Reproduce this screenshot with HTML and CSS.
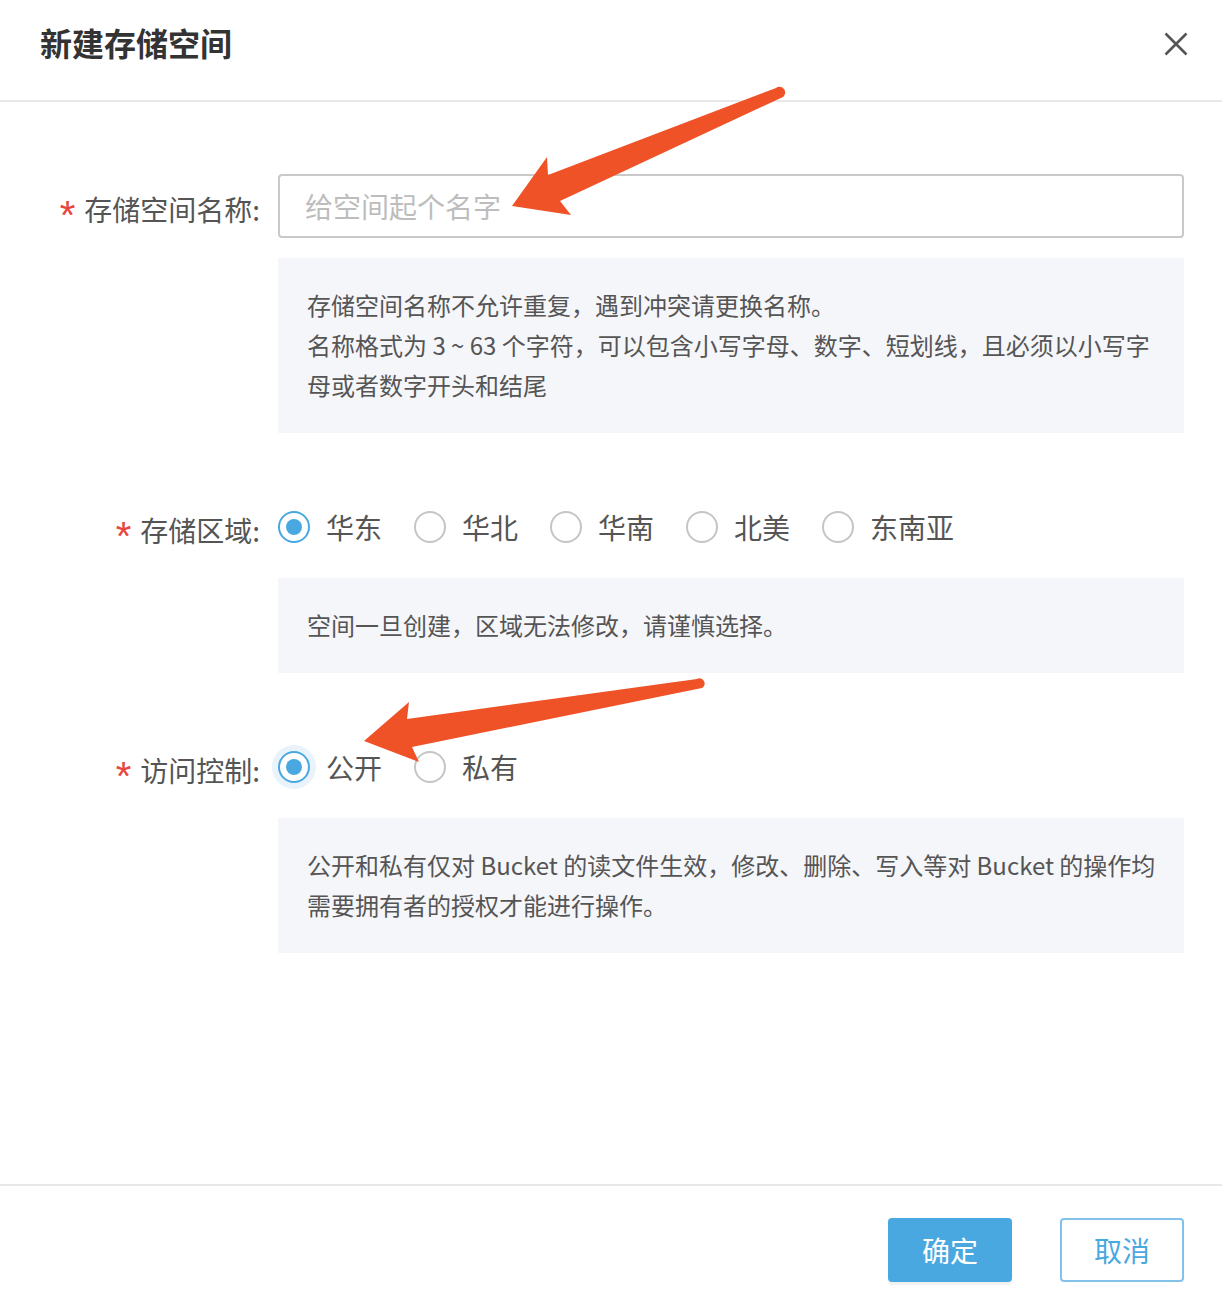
FILE: index.html
```html
<!DOCTYPE html>
<html lang="zh-CN">
<head>
<meta charset="utf-8">
<title>新建存储空间</title>
<link rel="stylesheet" href="styles.css">
</head>
<body>
<div class="dialog">
  <header class="dlg-head">
    <h1 class="dlg-title">新建存储空间</h1>
    <button class="close" type="button" aria-label="关闭">
      <svg width="24" height="24" viewBox="0 0 24 24"><path d="M1.5 1.5 L22.5 22.5 M22.5 1.5 L1.5 22.5" stroke="#555" stroke-width="2.6" fill="none"/></svg>
    </button>
  </header>

  <main class="dlg-body">
    <div class="field">
      <label class="label"><span class="req">*</span>存储空间名称:</label>
      <div class="control">
        <input class="input" type="text" placeholder="给空间起个名字">
      </div>
      <div class="help">
        <span class="line">存储空间名称不允许重复，遇到冲突请更换名称。</span>
        <span class="line">名称格式为 3 ~ 63 个字符，可以包含小写字母、数字、短划线，且必须以小写字</span>
        <span class="line">母或者数字开头和结尾</span>
      </div>
    </div>

    <div class="field">
      <label class="label"><span class="req">*</span>存储区域:</label>
      <div class="control radios">
        <span class="radio-opt"><span class="radio checked"></span>华东</span>
        <span class="radio-opt"><span class="radio"></span>华北</span>
        <span class="radio-opt"><span class="radio"></span>华南</span>
        <span class="radio-opt"><span class="radio"></span>北美</span>
        <span class="radio-opt"><span class="radio"></span>东南亚</span>
      </div>
      <div class="help">
        <span class="line">空间一旦创建，区域无法修改，请谨慎选择。</span>
      </div>
    </div>

    <div class="field">
      <label class="label"><span class="req">*</span>访问控制:</label>
      <div class="control radios">
        <span class="radio-opt"><span class="radio checked focus"></span>公开</span>
        <span class="radio-opt"><span class="radio"></span>私有</span>
      </div>
      <div class="help">
        <span class="line">公开和私有仅对 Bucket 的读文件生效，修改、删除、写入等对 Bucket 的操作均</span>
        <span class="line">需要拥有者的授权才能进行操作。</span>
      </div>
    </div>
  </main>

  <footer class="dlg-foot">
    <button class="btn btn-primary" type="button">确定</button>
    <button class="btn btn-default" type="button">取消</button>
  </footer>

  <svg class="arrows" width="1222" height="1304" viewBox="0 0 1222 1304">
    <path d="M776 88 L548 175 L547 157 L512 206 L571 215 L560 201 L783 97 A5.7 5.7 0 0 0 776 88 Z" fill="#f05228"/>
    <path d="M697 679 L407 719 L409 702 L364 741 L419 762 L412 747 L702 688 A4.8 4.8 0 0 0 697 679 Z" fill="#f05228"/>
  </svg>
</div>
</body>
</html>
```

FILE: styles.css
```css
* { box-sizing: border-box; }

html, body {
  margin: 0;
  padding: 0;
  background: #fff;
}

body {
  font-family: "Noto Sans CJK SC", "Noto Sans", sans-serif;
  color: #555;
}

.dialog {
  position: relative;
  width: 1222px;
  height: 1304px;
  display: flex;
  flex-direction: column;
  overflow: hidden;
}

.dlg-head {
  height: 102px;
  flex: none;
  border-bottom: 2px solid #e8e8e8;
  display: flex;
  align-items: center;
  justify-content: space-between;
  padding: 0 34px 12px 40px;
}

.dlg-title {
  margin: 0;
  font-size: 32px;
  font-weight: 700;
  color: #333;
  line-height: 1;
  position: relative;
  top: -2px;
}

.close {
  width: 24px;
  height: 24px;
  padding: 0;
  border: 0;
  background: none;
  display: block;
}

.close svg { display: block; }

.dlg-body {
  flex: 1;
  padding-top: 72px;
  display: flex;
  flex-direction: column;
  gap: 63px;
}

.field {
  display: grid;
  grid-template-columns: 262px 906px;
  column-gap: 16px;
  row-gap: 20px;
}

.label {
  align-self: center;
  text-align: right;
  font-size: 28px;
  line-height: 40px;
  padding-top: 4px;
  padding-right: 2px;
  white-space: nowrap;
  color: #555;
}

.req {
  font-family: "Liberation Sans", sans-serif;
  font-size: 40px;
  line-height: 40px;
  color: #e8453c;
  margin-right: 9px;
  position: relative;
  top: 8px;
}

.control { grid-column: 2; }

.input {
  display: block;
  width: 100%;
  height: 64px;
  border: 2px solid #c9c9c9;
  border-radius: 4px;
  padding: 0 25px;
  font-family: inherit;
  font-size: 28px;
  color: #555;
  outline: none;
  background: #fff;
}

.input::placeholder { color: #bdbdbd; }

.radios {
  display: flex;
  align-items: center;
  height: 62px;
}

.radio-opt {
  display: flex;
  align-items: center;
  margin-right: 32px;
  font-size: 28px;
  line-height: 40px;
  color: #555;
}

.radio {
  flex: none;
  width: 32px;
  height: 32px;
  border: 2.5px solid #c5c5c5;
  border-radius: 50%;
  margin-right: 16px;
  display: flex;
  align-items: center;
  justify-content: center;
  background: #fff;
}

.radio.checked { border-color: #4aa8e1; }

.radio.checked::after {
  content: "";
  width: 16px;
  height: 16px;
  border-radius: 50%;
  background: #4aa8e1;
}

.radio.focus { box-shadow: 0 0 0 6px #e8f3fc; }

.help {
  grid-column: 2;
  background: #f5f6fa;
  padding: 27px 29px 28px;
  font-size: 24px;
  line-height: 40px;
  color: #555;
}

.help .line {
  display: block;
  white-space: nowrap;
}

.dlg-foot {
  height: 120px;
  flex: none;
  border-top: 2px solid #e8e8e8;
  display: flex;
  justify-content: flex-end;
  align-items: flex-start;
  gap: 48px;
  padding: 32px 38px 0 0;
}

.btn {
  width: 124px;
  height: 64px;
  border-radius: 4px;
  font-family: inherit;
  font-size: 28px;
  padding: 0;
  cursor: pointer;
}

.btn-primary {
  background: #4aa8e1;
  color: #fff;
  border: 0;
  box-shadow: 0 3px 2px rgba(0, 0, 0, 0.06);
}

.btn-default {
  background: #fff;
  color: #4aa8e1;
  border: 2px solid #82c2ea;
}

.arrows {
  position: absolute;
  left: 0;
  top: 0;
  pointer-events: none;
}
```
